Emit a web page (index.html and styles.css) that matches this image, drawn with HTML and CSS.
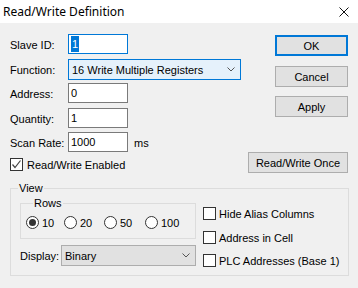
FILE: index.html
```html
<!DOCTYPE html>
<html lang="en">
<head>
    <meta charset="UTF-8">
    <title>Read/Write Definition</title>
    <link rel="stylesheet" href="styles.css">
</head>
<body>
    <div class="titlebar">
        <span class="title">Read/Write Definition</span>
        <svg class="close" width="10" height="10" viewBox="0 0 10 10">
            <path d="M0.5 0.5 L9.5 9.5 M9.5 0.5 L0.5 9.5" stroke="#111" stroke-width="1" fill="none"/>
        </svg>
    </div>

    <div class="content">
        <div class="top">
            <div class="form">
                <div class="fields">
                    <span class="label">Slave ID:</span>
                    <div class="input focus"><span class="sel">1</span></div>

                    <span class="label">Function:</span>
                    <div class="combo hot">
                        <span>16 Write Multiple Registers</span>
                        <svg class="chev" width="8" height="5" viewBox="0 0 8 5"><path d="M0.5 0.5 L4 4 L7.5 0.5" stroke="#555" fill="none"/></svg>
                    </div>

                    <span class="label">Address:</span>
                    <div class="input">0</div>

                    <span class="label">Quantity:</span>
                    <div class="input">1</div>

                    <span class="label">Scan Rate:</span>
                    <div class="rate">
                        <div class="input">1000</div>
                        <span class="unit">ms</span>
                    </div>
                </div>
                <div class="check enabled">
                    <span class="box">
                        <svg width="11" height="11" viewBox="0 0 11 11"><path d="M1.5 5.5 L4 8.5 L9.5 1.5" stroke="#444" stroke-width="1.2" fill="none"/></svg>
                    </span>
                    <span>Read/Write Enabled</span>
                </div>
            </div>

            <div class="actions">
                <button class="btn default">OK</button>
                <button class="btn cancel">Cancel</button>
                <button class="btn apply">Apply</button>
                <button class="btn once">Read/Write Once</button>
            </div>
        </div>

        <fieldset class="group view">
            <legend>View</legend>
            <div class="view-body">
                <div class="view-left">
                    <fieldset class="group rows">
                        <legend>Rows</legend>
                        <div class="radios">
                            <div class="radio"><span class="dot on"></span>10</div>
                            <div class="radio"><span class="dot"></span>20</div>
                            <div class="radio"><span class="dot"></span>50</div>
                            <div class="radio"><span class="dot"></span>100</div>
                        </div>
                    </fieldset>
                    <div class="display-row">
                        <span class="display-label">Display:</span>
                        <div class="combo display">
                            <span>Binary</span>
                            <svg class="chev" width="8" height="5" viewBox="0 0 8 5"><path d="M0.5 0.5 L4 4 L7.5 0.5" stroke="#555" fill="none"/></svg>
                        </div>
                    </div>
                </div>

                <div class="options">
                    <div class="check"><span class="box"></span><span>Hide Alias Columns</span></div>
                    <div class="check"><span class="box"></span><span>Address in Cell</span></div>
                    <div class="check"><span class="box"></span><span>PLC Addresses (Base 1)</span></div>
                </div>
            </div>
        </fieldset>
    </div>
</body>
</html>
```

FILE: styles.css
```css
body {
    margin: 0;
    width: 358px;
    height: 288px;
    overflow: hidden;
    background-color: #f0f0f0;
    font-family: 'Liberation Sans', Arial, sans-serif;
    font-size: 11px;
    color: #000;
}

.titlebar {
    height: 23px;
    background-color: #fff;
    display: flex;
    align-items: center;
    justify-content: space-between;
    padding: 0 9px 0 3px;
    font-family: 'Noto Sans', sans-serif;
    font-size: 12px;
}

.content {
    padding: 11px 9px 0 10px;
}

.top {
    display: flex;
    justify-content: space-between;
    align-items: flex-start;
}

.fields {
    display: grid;
    grid-template-columns: 58px auto;
    grid-template-rows: 25px 24px 25px 24px 20px;
    align-items: start;
}

.label {
    line-height: 20px;
    padding-top: 1px;
}

.input {
    width: 60px;
    height: 20px;
    box-sizing: border-box;
    border: 1px solid #7a7a7a;
    background-color: #fff;
    padding-left: 2px;
    line-height: 18px;
}

.input.focus {
    border-color: #0078d7;
}

.sel {
    display: inline-block;
    background-color: #0078d7;
    color: #fff;
    line-height: 16px;
    padding: 0 1px;
}

.combo {
    height: 21px;
    box-sizing: border-box;
    border: 1px solid #adadad;
    background-color: #e1e1e1;
    display: flex;
    align-items: center;
    justify-content: space-between;
    padding: 0 5px 0 3px;
}

.combo.hot {
    width: 173px;
    border-color: #0078d7;
    background-color: #e5f1fb;
}

.rate {
    display: flex;
    align-items: center;
}

.unit {
    margin-left: 6px;
    padding-top: 2px;
}

.check {
    display: flex;
    align-items: center;
    gap: 3px;
    height: 13px;
}

.check.enabled {
    margin-top: 6px;
    gap: 4px;
}

.box {
    width: 13px;
    height: 13px;
    box-sizing: border-box;
    border: 1px solid #333;
    background-color: #fff;
    display: flex;
    align-items: center;
    justify-content: center;
}

.actions {
    display: flex;
    flex-direction: column;
    align-items: flex-end;
    padding-top: 1px;
    margin-right: 1px;
}

.btn {
    width: 73px;
    height: 21px;
    box-sizing: border-box;
    border: 1px solid #adadad;
    background-color: #e1e1e1;
    font: inherit;
    color: #000;
    padding: 0;
}

.btn.default {
    border: 2px solid #0078d7;
}

.cancel {
    margin-top: 10px;
}

.apply {
    margin-top: 9px;
}

.once {
    width: 100px;
    margin-top: 35px;
}

.group {
    margin: 0;
    padding: 0;
    border: 1px solid #dcdcdc;
    min-width: 0;
}

.group legend {
    padding: 0 1px;
    margin-left: 7px;
    line-height: 13px;
}

.view {
    margin-top: 9px;
    padding-bottom: 8px;
}

.view-body {
    display: flex;
    gap: 7px;
}

.view-left {
    margin-left: 9px;
    width: 176px;
}

.rows {
    margin-top: 2px;
    padding: 6px 0 9px 5px;
}

.radios {
    display: grid;
    grid-template-columns: 38px 40px 41px auto;
}

.radio {
    display: flex;
    align-items: center;
    gap: 3px;
    height: 13px;
}

.dot {
    width: 13px;
    height: 13px;
    box-sizing: border-box;
    border: 1px solid #333;
    border-radius: 50%;
    background-color: #fff;
    display: flex;
    align-items: center;
    justify-content: center;
}

.dot.on::after {
    content: '';
    width: 7px;
    height: 7px;
    border-radius: 50%;
    background-color: #333;
}

.display-row {
    display: flex;
    align-items: center;
    margin-top: 6px;
}

.display-label {
    width: 41px;
}

.combo.display {
    width: 135px;
}

.options {
    padding-top: 12px;
    display: grid;
    grid-template-rows: 24px 23px 13px;
}
```
